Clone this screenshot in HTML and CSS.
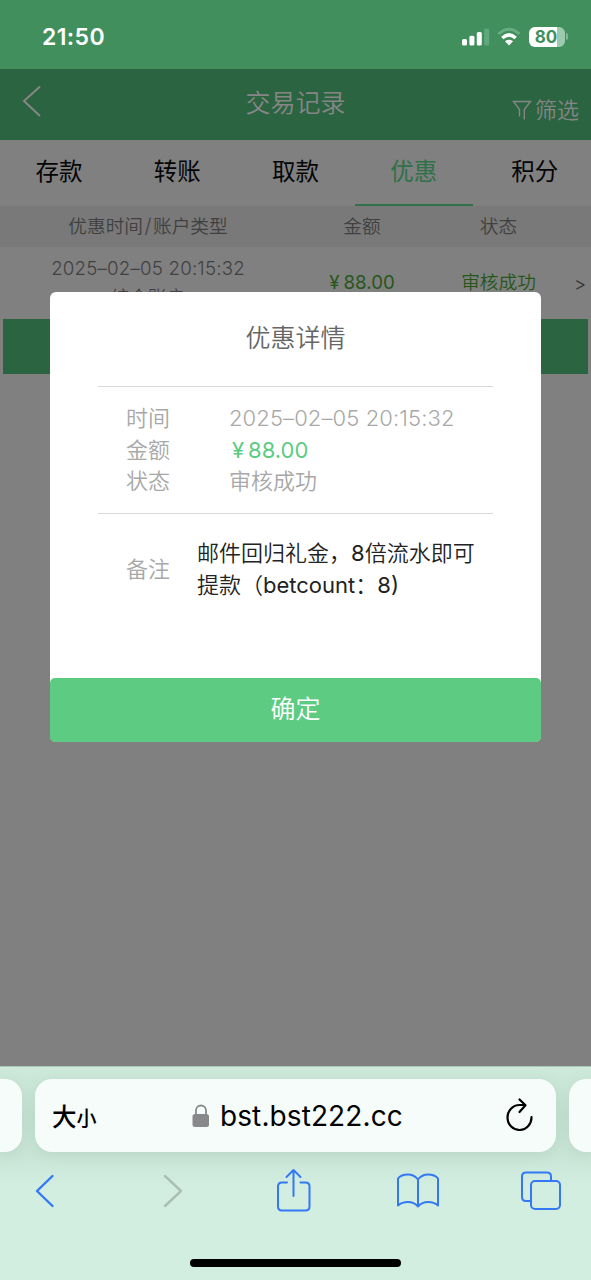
FILE: index.html
```html
<!DOCTYPE html>
<html lang="zh-CN">
<head>
<meta charset="utf-8">
<title>交易记录</title>
<link rel="stylesheet" href="styles.css">
</head>
<body>
<div class="phone">
  <div class="status">
    <span class="clock">21:50</span>
    <div class="indicators">
      <svg class="signal" width="28" height="18" viewBox="0 0 28 18">
        <g fill="#fff"><rect x="0" y="11" width="5" height="6.500" rx="1.500"/><rect x="7.400" y="7.800" width="5" height="9.700" rx="1.500"/><rect x="14.800" y="4" width="5" height="13.500" rx="1.500"/></g>
        <rect x="22.200" y="0.500" width="5" height="17" rx="1.500" fill="#5fa87b"/>
      </svg>
      <svg class="wifi" width="24" height="18" viewBox="0 0 24 18" fill="none">
        <path d="M1.500 6Q12-3.500 22.500 6" stroke="#68ad82" stroke-width="3"/>
        <path d="M5.300 10Q12 3.800 18.700 10" stroke="#fff" stroke-width="3.400"/>
        <path d="M8 13.200Q12 10.300 16 13.200L12 17.500Z" fill="#fff"/>
      </svg>
      <div class="battery"><span>80</span></div><i class="battery-tip"></i>
    </div>
  </div>
  <div class="nav">
    <svg class="nav-back" width="20" height="32" viewBox="0 0 20 32" fill="none" stroke="#868686" stroke-width="2"><path d="M18 1.500L2 16L18 31"/></svg>
    <h1 class="nav-title">交易记录</h1>
    <div class="filter">
      <svg width="20" height="20" viewBox="0 0 20 20" fill="none" stroke="#868686" stroke-width="1.400"><path d="M7.500 16.500V9.500L1.500 1.500H18.500L12.300 9.500V19.500"/></svg>
      <span>筛选</span>
    </div>
  </div>
  <div class="tabs">
    <div class="tab">存款</div><div class="tab">转账</div><div class="tab">取款</div><div class="tab active">优惠</div><div class="tab last">积分</div>
  </div>
  <div class="row head"><span>优惠时间<i class="slash">/</i>账户类型</span><span>金额</span><span>状态</span><span></span></div>
  <div class="row record">
    <div class="when"><div class="date">2025–02–05 20:15:32</div><div>综合账户</div></div>
    <span class="green amount"><b>¥</b>88.00</span><span class="green">审核成功</span><span class="more">&gt;</span>
  </div>
  <div class="band"></div>
  <div class="space"></div>
  <div class="browser">
    <div class="bars">
      <div class="peek left"></div>
      <div class="address">
        <div class="size">大<small>小</small></div>
        <div class="host">
          <svg width="18" height="24" viewBox="0 0 18 24"><path d="M4 11V6.500a5 5 0 0 1 10 0V11" fill="none" stroke="#89898c" stroke-width="1.800"/><rect x="0.500" y="10" width="16.500" height="13" rx="2.500" fill="#89898c"/></svg>
          <span>bst.bst222.cc</span>
        </div>
        <svg class="reload" width="30" height="34" viewBox="0 0 30 34" fill="none" stroke="#000" stroke-width="2.200" stroke-linecap="round" stroke-linejoin="round"><path d="M26.500 19A12 12.500 0 1 1 14.500 7H20"/><path d="M14.500 1.500L20.500 7.300L14.500 14"/></svg>
      </div>
      <div class="peek right"></div>
    </div>
    <div class="tools">
      <svg width="20" height="34" viewBox="0 0 20 34" fill="none" stroke="#3478f6" stroke-width="2.400" stroke-linecap="round" stroke-linejoin="round"><path d="M17.500 2L2 17L17.500 32"/></svg>
      <svg width="20" height="34" viewBox="0 0 20 34" fill="none" stroke="#aabfb4" stroke-width="2.400" stroke-linecap="round" stroke-linejoin="round"><path d="M2 2L18 17L2 32"/></svg>
      <svg width="36" height="44" viewBox="0 0 36 44" fill="none" stroke="#3478f6" stroke-width="2" stroke-linecap="round" stroke-linejoin="round"><path d="M11 13.500H6Q2 13.500 2 17.500V37.500Q2 41.500 6 41.500H29.500Q33.500 41.500 33.500 37.500V17.500Q33.500 13.500 29.500 13.500H24.500M17.500 27V1M10.500 8L17.500 1L24.500 8"/></svg>
      <svg width="44" height="36" viewBox="0 0 44 36" fill="none" stroke="#3478f6" stroke-width="2" stroke-linejoin="round"><path d="M22 6.500Q18 1.500 12 1.500Q5 1.500 2 5.500V32.500Q6 29 12 29Q18 29 22 33.500Q26 29 32 29Q38 29 42 32.500V5.500Q39 1.500 32 1.500Q26 1.500 22 6.500V33.500"/></svg>
      <svg width="42" height="40" viewBox="0 0 42 40" fill="none" stroke="#3478f6" stroke-width="2"><path d="M11 30H6Q2 30 2 26V5.500Q2 1.500 6 1.500H27Q31 1.500 31 5.500V10"/><rect x="11" y="10" width="29" height="28" rx="4"/></svg>
    </div>
    <div class="home"></div>
  </div>
  <div class="modal">
    <h2>优惠详情</h2>
    <dl class="details">
      <dt>时间</dt><dd class="date">2025–02–05 20:15:32</dd>
      <dt>金额</dt><dd class="amount bright"><b>¥</b>88.00</dd>
      <dt>状态</dt><dd>审核成功</dd>
    </dl>
    <div class="note"><span class="label">备注</span><p>邮件回归礼金，<i>8</i>倍流水即可<br>提款（<i>betcount</i>：<i>8</i><em>)</em></p></div>
    <div class="confirm">确定</div>
  </div>
</div>
</body>
</html>
```
FILE: styles.css
```css
* { box-sizing: border-box; }
body { margin: 0; font-family: Inter, "Noto Sans CJK SC", sans-serif; }
h1, h2, p, dl, dd { margin: 0; font-weight: inherit; }
svg { display: block; flex: none; overflow: visible; }
i, em { font-style: normal; }
.phone { position: relative; display: flex; flex-direction: column; width: 591px; height: 1280px; background: #808080; overflow: hidden; font-weight: 350; }

.status { height: 69px; background: #418f5c; display: flex; align-items: center; justify-content: space-between; padding: 4px 23px 0 42px; color: #fff; }
.clock { font-size: 23px; font-weight: 600; letter-spacing: 0.4px; }
.indicators { display: flex; align-items: center; }
.wifi { margin: 0 8px 0 7px; }
.battery { width: 36px; height: 20px; border-radius: 6px; background: linear-gradient(90deg, #fff 28px, #9bcbad 28px); color: #418f5c; font-size: 17px; font-weight: 700; line-height: 20px; text-align: center; padding-right: 2px; }
.battery-tip { width: 2px; height: 7px; margin-left: 1px; border-radius: 0 3px 3px 0; background: #7eb994; }

.nav { height: 71px; background: #2b6440; display: grid; grid-template-columns: 120px 1fr 120px; color: #868686; }
.nav-back { margin: 16px 0 0 22px; }
.nav-title { font-size: 25px; line-height: 36px; padding-top: 16px; text-align: center; }
.filter { display: flex; justify-content: flex-end; gap: 3px; padding: 24px 12px 0 0; font-size: 22px; line-height: 34px; }
.filter svg { margin-top: 7px; }

.tabs { height: 66px; display: flex; color: #050505; font-size: 23.5px; font-weight: 400; line-height: 64px; text-align: center; }
.tab { width: 118.200px; }
.tab.last { padding-left: 6px; }
.tab.active { color: #2f7148; border-bottom: 2px solid #2f7148; }

.row { display: grid; grid-template-columns: 296px 132px 141px 22px; text-align: center; color: #404040; font-size: 18.7px; }
.row.head { height: 41px; line-height: 41px; background: #797979; }
.slash { margin: 0 1.500px; font-size: 20px; }
.row.record { height: 72px; line-height: 72px; }
.when { line-height: 26px; padding-top: 9px; }
.when > div:last-child { padding-top: 3px; }
.when .date { letter-spacing: 0.2px; }
.green { color: #275619; }
.amount b { font-weight: inherit; margin-right: 4px; }
.record .amount { font-weight: 400; }
.more { color: #333; padding-top: 2px; }
.band { height: 55px; margin: 0 3px; background: #2b6440; }
.space { flex: 1; }

.browser { height: 214px; background: linear-gradient(#cde9da, #c6e2d3 50px, #c9e5d7 88px, #d2eee0 120px); border-top: 1px solid #aac9b8; }
.bars { display: grid; grid-template-columns: 22px 521px 22px; gap: 13px; height: 86px; padding-top: 12px; }
.peek, .address { height: 73px; background: #f6fcf9; box-shadow: 0 3px 14px rgba(70, 120, 90, 0.12); }
.peek.left { border-radius: 0 17px 17px 0; }
.peek.right { border-radius: 17px 0 0 17px; }
.address { border-radius: 17px; display: grid; grid-template-columns: 100px 1fr 100px; align-items: center; color: #000; }
.size { font-size: 24.5px; font-weight: 500; padding-left: 17px; white-space: nowrap; }
.size small { font-size: 20px; }
.host { display: flex; align-items: center; gap: 10px; padding-left: 57px; font-size: 28px; font-weight: 400; letter-spacing: 0.1px; white-space: nowrap; }
.reload { justify-self: end; margin: -2px 21px 0 0; }
.tools { display: grid; grid-template-columns: 128px 113px 120px 124px 42px; align-items: center; height: 76px; padding: 0 0 0 35px; }
.home { width: 211px; height: 8px; border-radius: 4px; background: #000; margin: 30px auto 0; }

.modal { position: absolute; left: 50px; top: 292px; width: 491px; height: 450px; border-radius: 6px; background: #fff; display: flex; flex-direction: column; font-size: 22px; }
.modal h2 { height: 95px; margin: 0 48px; border-bottom: 1px solid #d9d9d9; color: #666; font-size: 25px; line-height: 93px; text-align: center; }
.details { height: 127px; margin: 0 48px; padding: 15px 0 0 28px; border-bottom: 1px solid #d9d9d9; display: grid; grid-template-columns: 103px 1fr; grid-auto-rows: 31.600px; line-height: 32px; color: #a8a8a8; }
.details .date { letter-spacing: 0.1px; }
.amount.bright { color: #5dcb82; font-weight: 400; padding-left: 3px; }
.note { flex: 1; display: flex; align-items: flex-start; padding: 23px 0 0 76px; line-height: 32px; }
.label { width: 71px; padding-top: 16px; color: #a8a8a8; }
.note p { color: #222; white-space: nowrap; }
.note i, .note em { font-weight: 400; }
.confirm { height: 64px; border-radius: 5px; background: #5dcb82; color: #fff; font-size: 25px; line-height: 62px; text-align: center; }
```
